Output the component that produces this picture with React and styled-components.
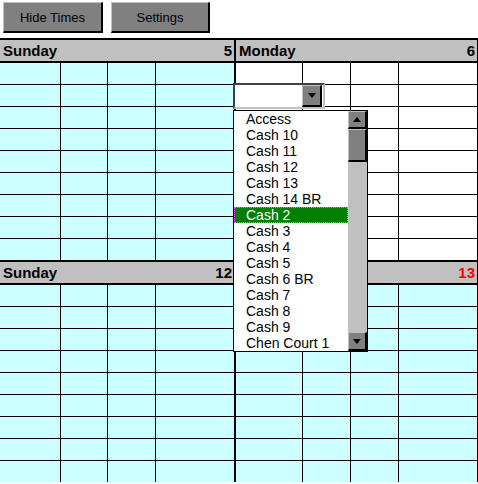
import React from "react"
import styled, { createGlobalStyle } from "styled-components"

const GlobalStyle = createGlobalStyle`
	body {
		margin: 0;
		background: #fff;
		font-family: "Liberation Sans", Arial, sans-serif;
	}
`

const weeks = [
	[
		{ name: "Sunday", num: 5, cyan: true },
		{ name: "Monday", num: 6, cyan: false },
	],
	[
		{ name: "Sunday", num: 12, cyan: true },
		{ name: "Monday", num: 13, cyan: true, red: true },
	],
]

const sundayCols = "61px 47px 48px 78px"
const mondayCols = "67px 48px 48px 78px"

const options = [
	"Access", "Cash 10", "Cash 11", "Cash 12", "Cash 13", "Cash 14 BR", "Cash 2",
	"Cash 3", "Cash 4", "Cash 5", "Cash 6 BR", "Cash 7", "Cash 8", "Cash 9", "Chen Court 1",
]

const Arrow = ({ up }) => (
	<svg width="8" height="5" viewBox="0 0 8 5">
		<polygon points={up ? "0,5 8,5 4,0" : "0,0 8,0 4,5"} fill="#000" />
	</svg>
)

const App = () => {
	return (
		<>
			<GlobalStyle />
			<Toolbar>
				<ToolButton $w={100}>Hide Times</ToolButton>
				<ToolButton $w={99}>Settings</ToolButton>
			</Toolbar>
			<Calendar>
				{weeks.map((week, wi) => (
					<Week key={wi}>
						{week.map((day, di) => (
							<Day key={di} $last={di === 1}>
								<DayHeader>
									<DayName>{day.name}</DayName>
									<DayNum $red={day.red}>{day.num}</DayNum>
								</DayHeader>
								{Array.from({ length: 9 }).map((_, ri) => (
									<Row key={ri} $cols={di === 0 ? sundayCols : mondayCols} $cyan={day.cyan}>
										<Cell /><Cell /><Cell /><Cell />
									</Row>
								))}
							</Day>
						))}
					</Week>
				))}
				<Select>
					<SelectValue />
					<SelectButton><Arrow /></SelectButton>
				</Select>
				<ListBox>
					<Options>
						{options.map((o) => (
							<Option key={o} $selected={o === "Cash 2"}>{o}</Option>
						))}
					</Options>
					<ScrollBar>
						<ScrollButton $h={18}><Arrow up /></ScrollButton>
						<ScrollButton $h={33} />
						<Track />
						<ScrollButton $h={19}><Arrow /></ScrollButton>
					</ScrollBar>
				</ListBox>
			</Calendar>
		</>
	)
}

const Toolbar = styled.div`
	display: flex;
	gap: 8px;
	height: 38px;
	padding: 2px 0 0 3px;
	box-sizing: border-box;
`

const ToolButton = styled.div`
	width: ${(p) => p.$w}px;
	height: 31px;
	box-sizing: border-box;
	background: #808080;
	border-top: 1px solid #c0c0c0;
	border-left: 1px solid #c0c0c0;
	border-right: 2px solid #000;
	border-bottom: 2px solid #000;
	display: flex;
	align-items: center;
	justify-content: center;
	font-size: 13px;
	color: #000;
`

const Calendar = styled.div`
	position: relative;
	width: 478px;
`

const Week = styled.div`
	display: flex;
`

const Day = styled.div`
	border-right: ${(p) => (p.$last ? "1px" : "2px")} solid #000;
`

const DayHeader = styled.div`
	height: 21px;
	background: #c0c0c0;
	border-top: 2px solid #000;
	border-bottom: 2px solid #000;
	display: flex;
	align-items: center;
	justify-content: space-between;
	padding: 0 2px 0 3px;
	font-size: 15px;
	font-weight: bold;
`

const DayName = styled.span`
	color: #000;
`

const DayNum = styled.span`
	color: ${(p) => (p.$red ? "#ff0000" : "#000")};
`

const Row = styled.div`
	display: grid;
	grid-template-columns: ${(p) => p.$cols};
	height: 21px;
	border-bottom: 1px solid #000;
	background: ${(p) => (p.$cyan ? "#ccffff" : "#fff")};
	&:last-child {
		border-bottom: none;
	}
`

const Cell = styled.div`
	border-right: 1px solid #000;
	&:last-child {
		border-right: none;
	}
`

const Select = styled.div`
	position: absolute;
	left: 233px;
	top: 45px;
	width: 92px;
	height: 26px;
	box-sizing: border-box;
	border-top: 2px solid #404040;
	border-left: 2px solid #404040;
	border-right: 2px solid #c0c0c0;
	border-bottom: 2px solid #c0c0c0;
	background: #fff;
	display: flex;
	justify-content: flex-end;
	align-items: stretch;
	padding: 0 1px 0 0;
`

const SelectValue = styled.div`
	flex: 1;
`

const SelectButton = styled.div`
	width: 20px;
	box-sizing: border-box;
	background: #808080;
	border-top: 1px solid #c0c0c0;
	border-left: 1px solid #c0c0c0;
	border-right: 2px solid #000;
	border-bottom: 2px solid #000;
	display: flex;
	align-items: center;
	justify-content: center;
`

const ListBox = styled.div`
	position: absolute;
	left: 233px;
	top: 72px;
	width: 135px;
	height: 242px;
	box-sizing: border-box;
	border: 1px solid #000;
	background: #fff;
	display: flex;
`

const Options = styled.div`
	flex: 1;
	display: flex;
	flex-direction: column;
`

const Option = styled.div`
	height: 16px;
	line-height: 16px;
	padding-left: 12px;
	font-size: 14px;
	box-sizing: border-box;
	color: ${(p) => (p.$selected ? "#fff" : "#000")};
	background: ${(p) => (p.$selected ? "#008000" : "transparent")};
	outline: ${(p) => (p.$selected ? "1px dotted #ff66ff" : "none")};
	outline-offset: -1px;
`

const ScrollBar = styled.div`
	width: 19px;
	background: #c0c0c0;
	display: flex;
	flex-direction: column;
`

const ScrollButton = styled.div`
	height: ${(p) => p.$h}px;
	box-sizing: border-box;
	background: #808080;
	border-top: 1px solid #c0c0c0;
	border-left: 1px solid #c0c0c0;
	border-right: 2px solid #000;
	border-bottom: 2px solid #000;
	display: flex;
	align-items: center;
	justify-content: center;
`

const Track = styled.div`
	flex: 1;
`

export default App
